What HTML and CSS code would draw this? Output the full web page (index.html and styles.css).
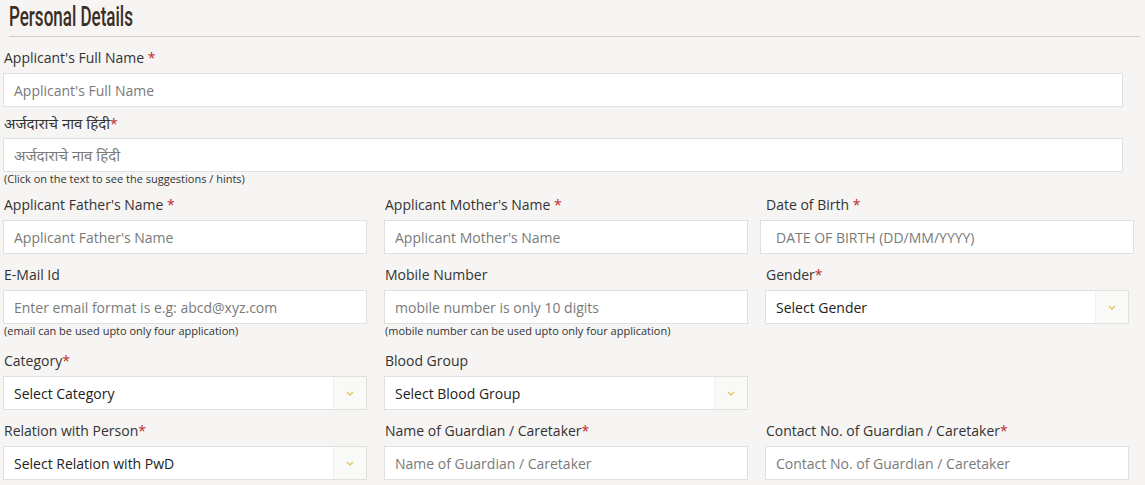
FILE: index.html
```html
<!DOCTYPE html>
<html lang="en">
<head>
<meta charset="utf-8">
<title>Personal Details</title>
<link rel="stylesheet" href="styles.css">
</head>
<body>
<div class="page">
  <div class="section-head"><h2 class="section-title"><span>Personal Details</span></h2></div>

  <div class="form">
    <div class="group g-full g1">
      <label class="lbl">Applicant's Full Name <span class="req">*</span></label>
      <input class="inp full" type="text" placeholder="Applicant's Full Name">
    </div>

    <div class="group g-full g2">
      <label class="lbl"><span class="deva">अर्जदाराचे नाव हिंदी</span><span class="req">*</span></label>
      <input class="inp full deva-inp" type="text" placeholder="अर्जदाराचे नाव हिंदी">
      <div class="hint">(Click on the text to see the suggestions / hints)</div>
    </div>

    <div class="row r1">
      <div class="group">
        <label class="lbl">Applicant Father's Name <span class="req">*</span></label>
        <input class="inp" type="text" placeholder="Applicant Father's Name">
      </div>
      <div class="group">
        <label class="lbl">Applicant Mother's Name <span class="req">*</span></label>
        <input class="inp" type="text" placeholder="Applicant Mother's Name">
      </div>
      <div class="group">
        <label class="lbl">Date of Birth <span class="req">*</span></label>
        <input class="inp dob" type="text" placeholder="DATE OF BIRTH (DD/MM/YYYY)">
      </div>
    </div>

    <div class="row r2">
      <div class="group">
        <label class="lbl">E-Mail Id</label>
        <input class="inp" type="text" placeholder="Enter email format is e.g: abcd@xyz.com">
        <div class="hint">(email can be used upto only four application)</div>
      </div>
      <div class="group">
        <label class="lbl">Mobile Number</label>
        <input class="inp" type="text" placeholder="mobile number is only 10 digits">
        <div class="hint">(mobile number can be used upto only four application)</div>
      </div>
      <div class="group">
        <label class="lbl">Gender<span class="req">*</span></label>
        <div class="sel">
          <span class="sel-text">Select Gender</span>
          <span class="sel-arrow"><svg width="8" height="5" viewBox="0 0 8 5"><polyline points="1,1 4,4 7,1" fill="none" stroke="#e5c86a" stroke-width="1.5"/></svg></span>
        </div>
      </div>
    </div>

    <div class="row r3">
      <div class="group">
        <label class="lbl">Category<span class="req">*</span></label>
        <div class="sel">
          <span class="sel-text">Select Category</span>
          <span class="sel-arrow"><svg width="8" height="5" viewBox="0 0 8 5"><polyline points="1,1 4,4 7,1" fill="none" stroke="#e5c86a" stroke-width="1.5"/></svg></span>
        </div>
      </div>
      <div class="group">
        <label class="lbl">Blood Group</label>
        <div class="sel">
          <span class="sel-text">Select Blood Group</span>
          <span class="sel-arrow"><svg width="8" height="5" viewBox="0 0 8 5"><polyline points="1,1 4,4 7,1" fill="none" stroke="#e5c86a" stroke-width="1.5"/></svg></span>
        </div>
      </div>
      <div class="group"></div>
    </div>

    <div class="row r4">
      <div class="group">
        <label class="lbl">Relation with Person<span class="req">*</span></label>
        <div class="sel">
          <span class="sel-text">Select Relation with PwD</span>
          <span class="sel-arrow"><svg width="8" height="5" viewBox="0 0 8 5"><polyline points="1,1 4,4 7,1" fill="none" stroke="#e5c86a" stroke-width="1.5"/></svg></span>
        </div>
      </div>
      <div class="group">
        <label class="lbl">Name of Guardian / Caretaker<span class="req">*</span></label>
        <input class="inp" type="text" placeholder="Name of Guardian / Caretaker">
      </div>
      <div class="group">
        <label class="lbl">Contact No. of Guardian / Caretaker<span class="req">*</span></label>
        <input class="inp" type="text" placeholder="Contact No. of Guardian / Caretaker">
      </div>
    </div>
  </div>
</div>
</body>
</html>
```

FILE: styles.css
```css
html, body {
  margin: 0;
  padding: 0;
  background: #f6f5f3;
  overflow: hidden;
}

body {
  font-family: "Open Sans", "Noto Sans", sans-serif;
  color: #333;
}

.page {
  width: 1145px;
  height: 485px;
}

.section-head {
  margin-left: 9px;
  width: 1131px;
  height: 37px;
  border-bottom: 1px solid #cfcdca;
  box-sizing: border-box;
}

.section-title {
  margin: 0;
  padding-top: 2px;
  font-family: Roboto, "DejaVu Sans", sans-serif;
  font-weight: 500;
  font-size: 27px;
  line-height: 30px;
  color: #3a2d24;
  white-space: nowrap;
}

.section-title span {
  display: inline-block;
  transform-origin: left center;
  transform: scaleX(0.63);
}

.form {
  padding-left: 3px;
  padding-top: 11px;
}

.lbl {
  display: block;
  height: 20px;
  font-size: 14px;
  line-height: 20px;
  margin-bottom: 5px;
  padding-left: 1px;
  color: #333;
  white-space: nowrap;
}

.deva {
  font-size: 15px;
}

.req {
  color: #c0282d;
}

.inp {
  display: block;
  box-sizing: border-box;
  width: 364px;
  height: 34px;
  margin: 0;
  padding: 0 10px;
  border: 1px solid #e2e0de;
  background: #fff;
  font-family: "Open Sans", "Noto Sans", sans-serif;
  font-size: 14px;
  color: #333;
  outline: none;
}

.inp::placeholder {
  color: #7a7a7a;
}

.inp.full {
  width: 1120px;
}

.inp.deva-inp {
  font-size: 15px;
}

.inp.dob {
  width: 374px;
  margin-left: -5px;
  padding-left: 15px;
}

.hint {
  font-size: 11px;
  line-height: 14px;
  padding-left: 1px;
  color: #333;
}

.g1 { margin-bottom: 6px; }
.g2 { margin-bottom: 9px; }

.row {
  display: grid;
  grid-template-columns: 364px 364px 364px;
  column-gap: 17px;
}

.r1 { margin-bottom: 11px; }
.r2 { margin-bottom: 13px; }
.r3 { margin-bottom: 11px; }

.sel {
  display: flex;
  box-sizing: border-box;
  width: 364px;
  height: 34px;
  border: 1px solid #e2e0de;
  background: #fff;
}

.sel-text {
  flex: 1;
  display: flex;
  align-items: center;
  padding-left: 10px;
  font-size: 14px;
  color: #222;
}

.sel-arrow {
  width: 32px;
  display: flex;
  align-items: center;
  justify-content: center;
  background: #f9f9f8;
  border-left: 1px solid #f1f0ee;
}
```
